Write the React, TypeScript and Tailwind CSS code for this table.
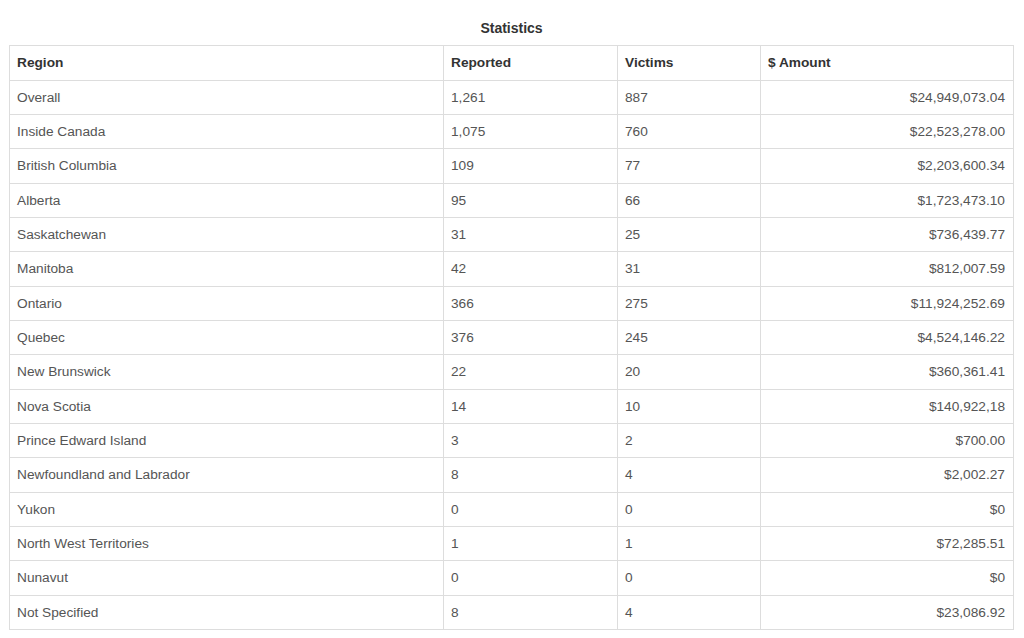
import React from "react";

type Row = { region: string; reported: string; victims: string; amount: string; h: string };

const rows: Row[] = [
  { region: "Overall", reported: "1,261", victims: "887", amount: "$24,949,073.04", h: "h-[34px]" },
  { region: "Inside Canada", reported: "1,075", victims: "760", amount: "$22,523,278.00", h: "h-[34px]" },
  { region: "British Columbia", reported: "109", victims: "77", amount: "$2,203,600.34", h: "h-[35px]" },
  { region: "Alberta", reported: "95", victims: "66", amount: "$1,723,473.10", h: "h-[34px]" },
  { region: "Saskatchewan", reported: "31", victims: "25", amount: "$736,439.77", h: "h-[34px]" },
  { region: "Manitoba", reported: "42", victims: "31", amount: "$812,007.59", h: "h-[35px]" },
  { region: "Ontario", reported: "366", victims: "275", amount: "$11,924,252.69", h: "h-[34px]" },
  { region: "Quebec", reported: "376", victims: "245", amount: "$4,524,146.22", h: "h-[34px]" },
  { region: "New Brunswick", reported: "22", victims: "20", amount: "$360,361.41", h: "h-[35px]" },
  { region: "Nova Scotia", reported: "14", victims: "10", amount: "$140,922,18", h: "h-[34px]" },
  { region: "Prince Edward Island", reported: "3", victims: "2", amount: "$700.00", h: "h-[34px]" },
  { region: "Newfoundland and Labrador", reported: "8", victims: "4", amount: "$2,002.27", h: "h-[35px]" },
  { region: "Yukon", reported: "0", victims: "0", amount: "$0", h: "h-[34px]" },
  { region: "North West Territories", reported: "1", victims: "1", amount: "$72,285.51", h: "h-[34px]" },
  { region: "Nunavut", reported: "0", victims: "0", amount: "$0", h: "h-[35px]" },
  { region: "Not Specified", reported: "8", victims: "4", amount: "$23,086.92", h: "h-[34px]" },
];

export default function App() {
  return (
    <div className="w-[1024px] h-[638px] bg-white overflow-hidden font-['Liberation_Sans',Arial,sans-serif]">
      <div className="pl-[9px] pr-[11px] pt-[20px]">
        <div className="text-center text-[14px] font-bold text-[#333] leading-[17px] h-[25px] pl-[1px]">
          Statistics
        </div>
        <table className="w-[1004px] table-fixed border-collapse text-[13.7px] text-[#555]">
          <colgroup>
            <col className="w-[434px]" />
            <col className="w-[174px]" />
            <col className="w-[143px]" />
            <col className="w-[253px]" />
          </colgroup>
          <thead>
            <tr className="h-[35px]">
              <th className="border border-[#ddd] pl-[7px] pr-[8px] pt-[1px] text-left font-bold text-[#333]">Region</th>
              <th className="border border-[#ddd] pl-[7px] pr-[8px] pt-[1px] text-left font-bold text-[#333]">Reported</th>
              <th className="border border-[#ddd] pl-[7px] pr-[8px] pt-[1px] text-left font-bold text-[#333]">Victims</th>
              <th className="border border-[#ddd] pl-[7px] pr-[8px] pt-[1px] text-left font-bold text-[#333]">$ Amount</th>
            </tr>
          </thead>
          <tbody>
            {rows.map((r) => (
              <tr key={r.region} className={r.h}>
                <td className="border border-[#ddd] pl-[7px] pr-[8px] pt-[1px]">{r.region}</td>
                <td className="border border-[#ddd] pl-[7px] pr-[8px] pt-[1px]">{r.reported}</td>
                <td className="border border-[#ddd] pl-[7px] pr-[8px] pt-[1px]">{r.victims}</td>
                <td className="border border-[#ddd] pl-[7px] pr-[8px] pt-[1px] text-right">{r.amount}</td>
              </tr>
            ))}
          </tbody>
        </table>
      </div>
    </div>
  );
}
